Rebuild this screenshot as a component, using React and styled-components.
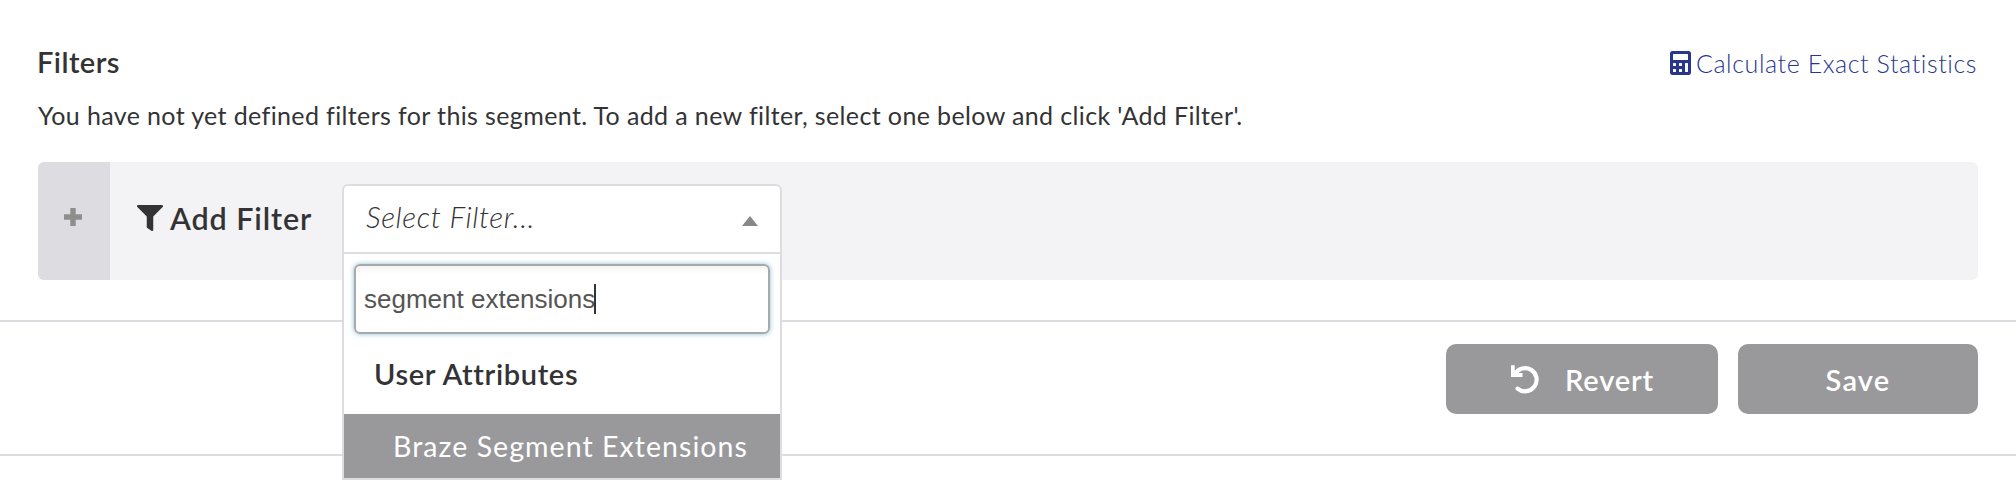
import React from 'react';
import styled, { createGlobalStyle } from 'styled-components';
import { FaCalculator, FaFilter } from 'react-icons/fa';

const GlobalStyle = createGlobalStyle`
  *, *::before, *::after { box-sizing: border-box; }
  body {
    margin: 0;
    background: #fff;
    color: #333335;
    font-family: Lato, "Liberation Sans", sans-serif;
  }
`;

const Page = styled.main`
  display: flex;
  flex-direction: column;
  height: 494px;
  overflow: hidden;
`;

const FiltersSection = styled.section`
  padding: 44px 38px 40px;
`;

const SectionHeader = styled.header`
  display: flex;
  justify-content: space-between;
  height: 36px;
`;

const SectionTitle = styled.h2`
  margin: 0 0 0 -1px;
  font-size: 29px;
  font-weight: 600;
  line-height: 36px;
  letter-spacing: 0.45px;
`;

const StatisticsLink = styled.a`
  display: flex;
  gap: 5px;
  padding: 1px 1px 0 0;
  color: #27368f;
  font-size: 25px;
  font-weight: 300;
  line-height: 36px;
  letter-spacing: 0.58px;

  svg {
    width: 21px;
    height: 24px;
    margin-top: 6px;
  }
`;

const Description = styled.p`
  margin: 17px 0 29px;
  font-size: 25px;
  line-height: 36px;
  letter-spacing: 0.375px;
`;

const FilterPanel = styled.div`
  display: flex;
  align-items: flex-start;
  height: 118px;
  border-radius: 6px;
  background: #f3f3f5;
`;

const PanelHandle = styled.div`
  display: flex;
  justify-content: center;
  width: 72px;
  height: 118px;
  padding-top: 46px;
  padding-right: 2px;
  border-radius: 6px 0 0 6px;
  background: #dddce1;
  color: #8e8e8e;

  svg {
    width: 18px;
    height: 18px;
  }
`;

const PanelTitle = styled.div`
  display: flex;
  gap: 7px;
  width: 232px;
  padding: 38px 0 0 27px;
  font-size: 30.5px;
  font-weight: 600;
  line-height: 36px;
  letter-spacing: 0.9px;
  white-space: nowrap;

  svg {
    flex: none;
    width: 26px;
    height: 26px;
    margin-top: 5px;
  }
`;

const FilterSelect = styled.div`
  position: relative;
  width: 440px;
  margin-top: 22px;
`;

const SelectControl = styled.div`
  display: flex;
  justify-content: space-between;
  height: 70px;
  padding: 0 22px;
  border: 2px solid #dddce1;
  border-radius: 6px 6px 0 0;
  background: #fff;
`;

const Placeholder = styled.span`
  font-size: 29.5px;
  font-style: italic;
  font-weight: 300;
  line-height: 62px;
  letter-spacing: 0.6px;
`;

const Arrow = styled.i`
  width: 16px;
  height: 10px;
  margin-top: 30px;
  background: #888;
  clip-path: polygon(50% 0, 100% 100%, 0 100%);
`;

const Dropdown = styled.div`
  position: absolute;
  z-index: 2;
  top: 70px;
  left: 0;
  width: 440px;
  height: 226px;
  border: 2px solid #dddce1;
  border-top: 0;
  background: #fff;
`;

const SearchField = styled.div`
  display: flex;
  align-items: center;
  height: 70px;
  margin: 10px 10px 0;
  padding-left: 8px;
  border: 2px solid #a9a9a9;
  border-radius: 6px;
  background: linear-gradient(#f4f4f4, #fff 8px);
  box-shadow: 0 0 5px rgba(70, 155, 200, 0.65);
  color: #555;
  font-family: "Liberation Sans", Arial, sans-serif;
  font-size: 26px;
  line-height: 66px;
`;

const Caret = styled.span`
  width: 2px;
  height: 30px;
  margin-left: -1px;
  background: #333;
`;

const GroupLabel = styled.div`
  height: 80px;
  padding: 0 0 0 30px;
  font-size: 29px;
  font-weight: 600;
  line-height: 80px;
  letter-spacing: 0.65px;
`;

const Option = styled.div`
  height: 64px;
  padding-left: 49px;
  background: #99999b;
  color: #fff;
  font-size: 28.5px;
  line-height: 64px;
  letter-spacing: 1.05px;
  white-space: nowrap;
`;

const ActionBar = styled.footer`
  display: flex;
  justify-content: flex-end;
  gap: 20px;
  height: 136px;
  padding: 22px 38px 0;
  border: solid #dddce1;
  border-width: 2px 0;
`;

const ActionButton = styled.button`
  display: flex;
  justify-content: center;
  width: ${({ $width }) => $width}px;
  height: 70px;
  padding: 0;
  border: 0;
  border-radius: 10px;
  background: #99999b;
  color: #fff;
  font: 600 29px/72px Lato, "Liberation Sans", sans-serif;
  letter-spacing: ${({ $tracking }) => $tracking}px;

  svg {
    width: 30px;
    height: 30px;
    margin: 20px 25px 0 0;
  }
`;

const PlusIcon = () => (
  <svg viewBox="0 0 18 18" fill="currentColor" aria-hidden="true">
    <path d="M6.3 0h5.4v6.3H18v5.4h-6.3V18H6.3v-6.3H0V6.3h6.3z" />
  </svg>
);

const UndoIcon = () => (
  <svg viewBox="0 0 30 30" fill="none" stroke="currentColor" aria-hidden="true">
    <path d="M4.8 10.2A11.6 11.6 0 1 1 7.6 24.6" strokeWidth="4.2" strokeLinecap="round" />
    <path d="M1 1.2h3.7v6.2l4.6 1.7h3.2v4H1z" fill="currentColor" stroke="none" />
  </svg>
);

export default function App() {
  return (
    <Page>
      <GlobalStyle />
      <FiltersSection>
        <SectionHeader>
          <SectionTitle>Filters</SectionTitle>
          <StatisticsLink>
            <FaCalculator />
            Calculate Exact Statistics
          </StatisticsLink>
        </SectionHeader>
        <Description>
          You have not yet defined filters for this segment. To add a new filter, select one below
          and click 'Add Filter'.
        </Description>
        <FilterPanel>
          <PanelHandle>
            <PlusIcon />
          </PanelHandle>
          <PanelTitle>
            <FaFilter />
            Add Filter
          </PanelTitle>
          <FilterSelect>
            <SelectControl>
              <Placeholder>Select Filter...</Placeholder>
              <Arrow />
            </SelectControl>
            <Dropdown>
              <SearchField>
                segment extensions
                <Caret />
              </SearchField>
              <GroupLabel>User Attributes</GroupLabel>
              <Option>Braze Segment Extensions</Option>
            </Dropdown>
          </FilterSelect>
        </FilterPanel>
      </FiltersSection>
      <ActionBar>
        <ActionButton $width={272} $tracking={0.85}>
          <UndoIcon />
          Revert
        </ActionButton>
        <ActionButton $width={240} $tracking={1.2}>
          Save
        </ActionButton>
      </ActionBar>
    </Page>
  );
}
